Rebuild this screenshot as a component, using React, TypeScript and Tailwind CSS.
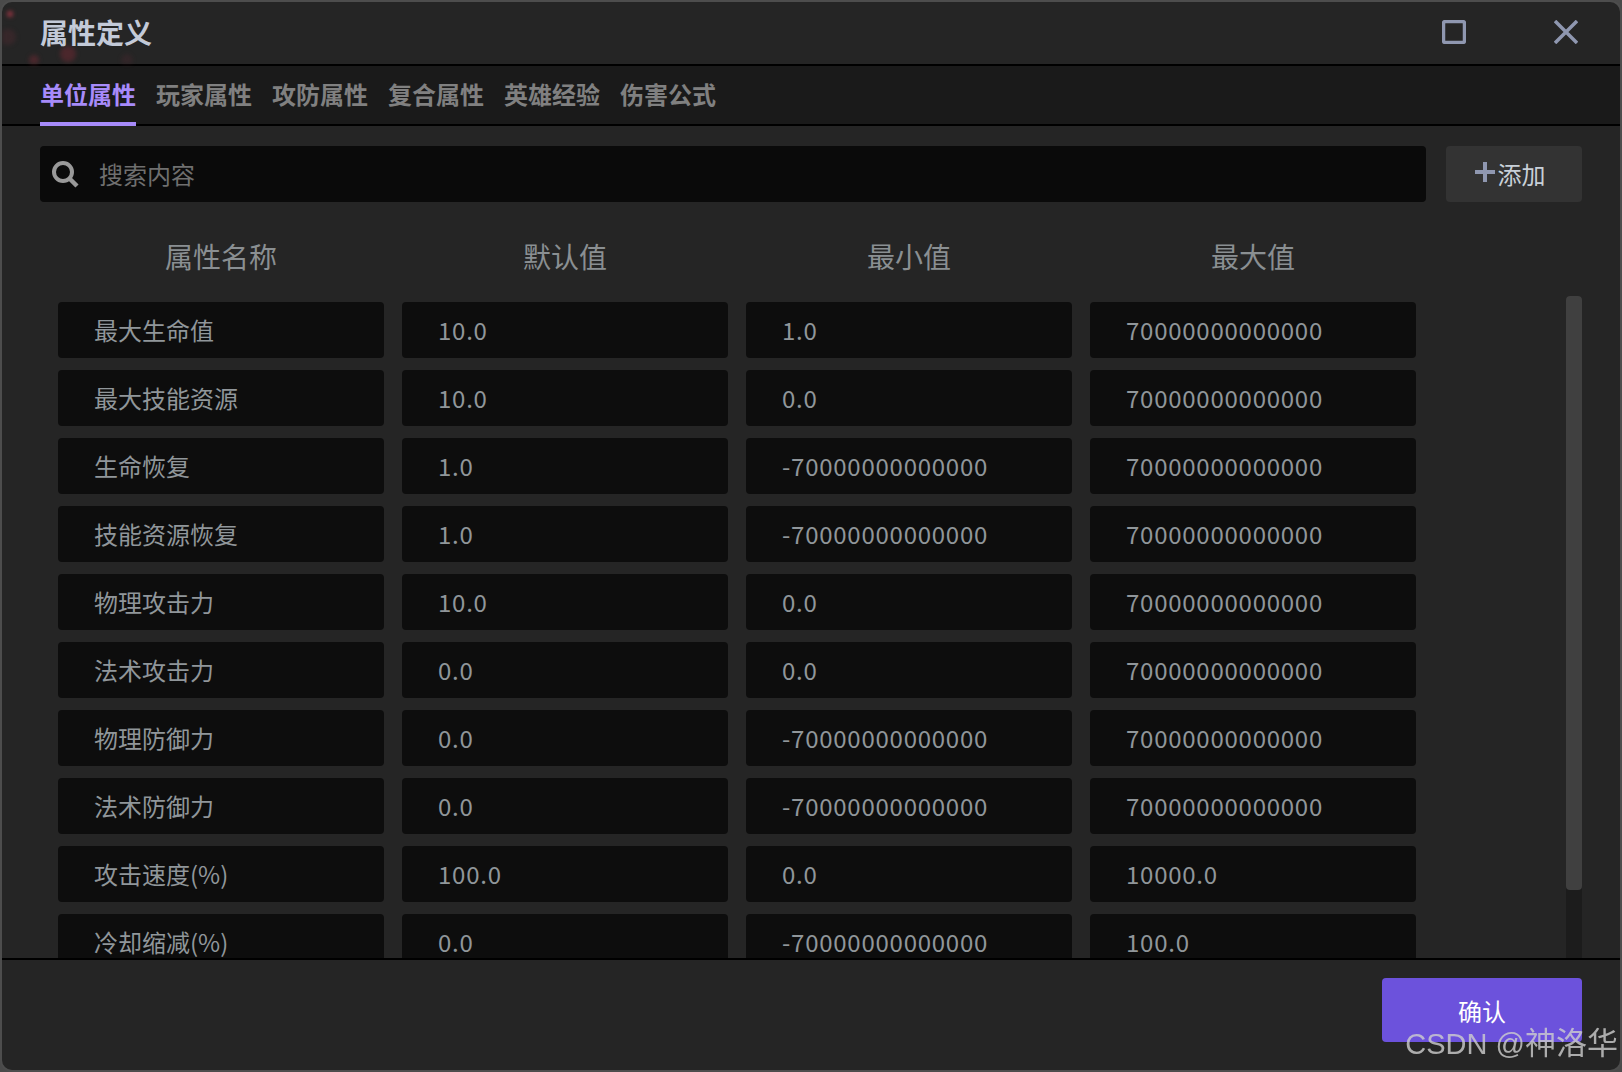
import React from "react";

const rows: [string, string, string, string][] = [
  ["最大生命值", "10.0", "1.0", "70000000000000"],
  ["最大技能资源", "10.0", "0.0", "70000000000000"],
  ["生命恢复", "1.0", "-70000000000000", "70000000000000"],
  ["技能资源恢复", "1.0", "-70000000000000", "70000000000000"],
  ["物理攻击力", "10.0", "0.0", "70000000000000"],
  ["法术攻击力", "0.0", "0.0", "70000000000000"],
  ["物理防御力", "0.0", "-70000000000000", "70000000000000"],
  ["法术防御力", "0.0", "-70000000000000", "70000000000000"],
  ["攻击速度(%)", "100.0", "0.0", "10000.0"],
  ["冷却缩减(%)", "0.0", "-70000000000000", "100.0"],
];
const tabs = ["单位属性", "玩家属性", "攻防属性", "复合属性", "英雄经验", "伤害公式"];
const heads = ["属性名称", "默认值", "最小值", "最大值"];

export default function App() {
  return (
    <div className="w-[1622px] h-[1072px] bg-[#4a4a4a] overflow-hidden font-['Noto_Sans_CJK_SC','Noto_Sans',sans-serif]">
      <div className="relative w-full h-full border-2 border-[#4d4d4d] rounded-[12px] bg-[#252525] flex flex-col overflow-hidden">
        <svg className="absolute left-0 top-0 blur-[2px]" width="170" height="62" viewBox="0 0 170 62">
          <circle cx="8" cy="12" r="3" fill="#b03a4a" opacity="0.8" />
          <circle cx="66" cy="52" r="8" fill="#7a2a35" opacity="0.45" />
          <circle cx="32" cy="58" r="5" fill="#7a2a35" opacity="0.45" />
          <circle cx="6" cy="35" r="8" fill="#5f2a35" opacity="0.3" />
          <circle cx="125" cy="58" r="6" fill="#6a2a35" opacity="0.2" />
        </svg>

        <header className="relative h-[62px] shrink-0 flex items-center pl-[38px]">
          <h1 className="text-[28px] font-bold text-[#c3cad8] leading-none mb-[2px]">属性定义</h1>
          <div className="ml-auto flex items-center mb-[2px]">
            <svg width="24" height="24" viewBox="0 0 24 24" className="mr-[88px]">
              <rect x="1.5" y="1.5" width="21" height="21" rx="2" fill="none" stroke="#8f97b0" strokeWidth="3.5" />
            </svg>
            <svg width="24" height="24" viewBox="0 0 24 24" className="mr-[42px]">
              <path d="M1 1 L23 23 M23 1 L1 23" stroke="#8f97b0" strokeWidth="3.5" fill="none" />
            </svg>
          </div>
        </header>

        <nav className="h-[62px] shrink-0 border-y-2 border-black bg-[#1a1a1a] flex gap-[20px] pl-[38px]">
          {tabs.map((t, i) => (
            <div
              key={t}
              className={
                "h-[60px] border-b-4 flex items-center text-[24px] font-bold leading-none " +
                (i === 0 ? "border-[#a78bfa] text-[#a78bfa]" : "border-transparent text-[#808080]")
              }
            >
              {t}
            </div>
          ))}
        </nav>

        <div className="flex gap-[20px] pl-[38px] pr-[38px] pt-[20px] shrink-0">
          <div className="flex-1 h-[56px] bg-[#0a0a0a] rounded-[4px] flex items-center pl-[10px]">
            <svg width="30" height="30" viewBox="0 0 30 30">
              <circle cx="13" cy="13" r="9" fill="none" stroke="#999999" strokeWidth="4" />
              <path d="M20 20 L27 27" stroke="#999999" strokeWidth="4.5" />
            </svg>
            <span className="ml-[19px] text-[24px] text-[#6f6f6f] leading-none">搜索内容</span>
          </div>
          <button className="w-[136px] h-[56px] bg-[#333333] rounded-[4px] flex items-center justify-center pr-[8px] text-[24px] text-[#c8d0d8] leading-none">
            <svg width="20" height="20" viewBox="0 0 20 20" className="mb-[4px] mr-[3px]">
              <path d="M10 0 V20 M0 10 H20" stroke="#8f97b0" strokeWidth="4" />
            </svg>
            <span>添加</span>
          </button>
        </div>

        <div className="relative flex-1 min-h-0 overflow-hidden">
          <div className="pl-[56px]">
            <div className="grid grid-cols-[repeat(4,326px)] gap-x-[18px] h-[100px] items-center">
              {heads.map((h) => (
                <div key={h} className="text-center text-[28px] text-[#8a8f92] leading-none mt-[8px]">
                  {h}
                </div>
              ))}
            </div>
            <div className="flex flex-col gap-[12px]">
              {rows.map((r) => (
                <div key={r[0]} className="grid grid-cols-[repeat(4,326px)] gap-x-[18px]">
                  {r.map((c, i) => (
                    <div
                      key={i}
                      className={
                        "h-[56px] shrink-0 bg-[#0d0d0d] rounded-[4px] flex items-center pl-[36px] text-[24px] text-[#90969a] leading-none " +
                        (i === 0 ? "" : "tracking-[0.75px]")
                      }
                    >
                      {c}
                    </div>
                  ))}
                </div>
              ))}
            </div>
          </div>
          <div className="absolute right-[38px] top-[94px] bottom-0 w-[16px] bg-[#1c1c1c] rounded-t-[4px]">
            <div className="h-[594px] bg-[#404040] rounded-[4px]" />
          </div>
        </div>

        <footer className="h-[112px] shrink-0 border-t-2 border-black flex justify-end pr-[38px] pt-[18px]">
          <button className="w-[200px] h-[64px] bg-[#6c52dc] rounded-[4px] text-[24px] text-white leading-none">
            <span className="relative top-[1px]">确认</span>
          </button>
        </footer>

        <div className="absolute right-[2px] bottom-[11px] flex items-baseline leading-none text-[#cfcfcf] opacity-80 font-['Liberation_Sans','Noto_Sans_CJK_SC',sans-serif]">
          <span className="text-[29px] whitespace-pre">CSDN @</span>
          <span className="text-[31px]">神洛华</span>
        </div>
      </div>
    </div>
  );
}
